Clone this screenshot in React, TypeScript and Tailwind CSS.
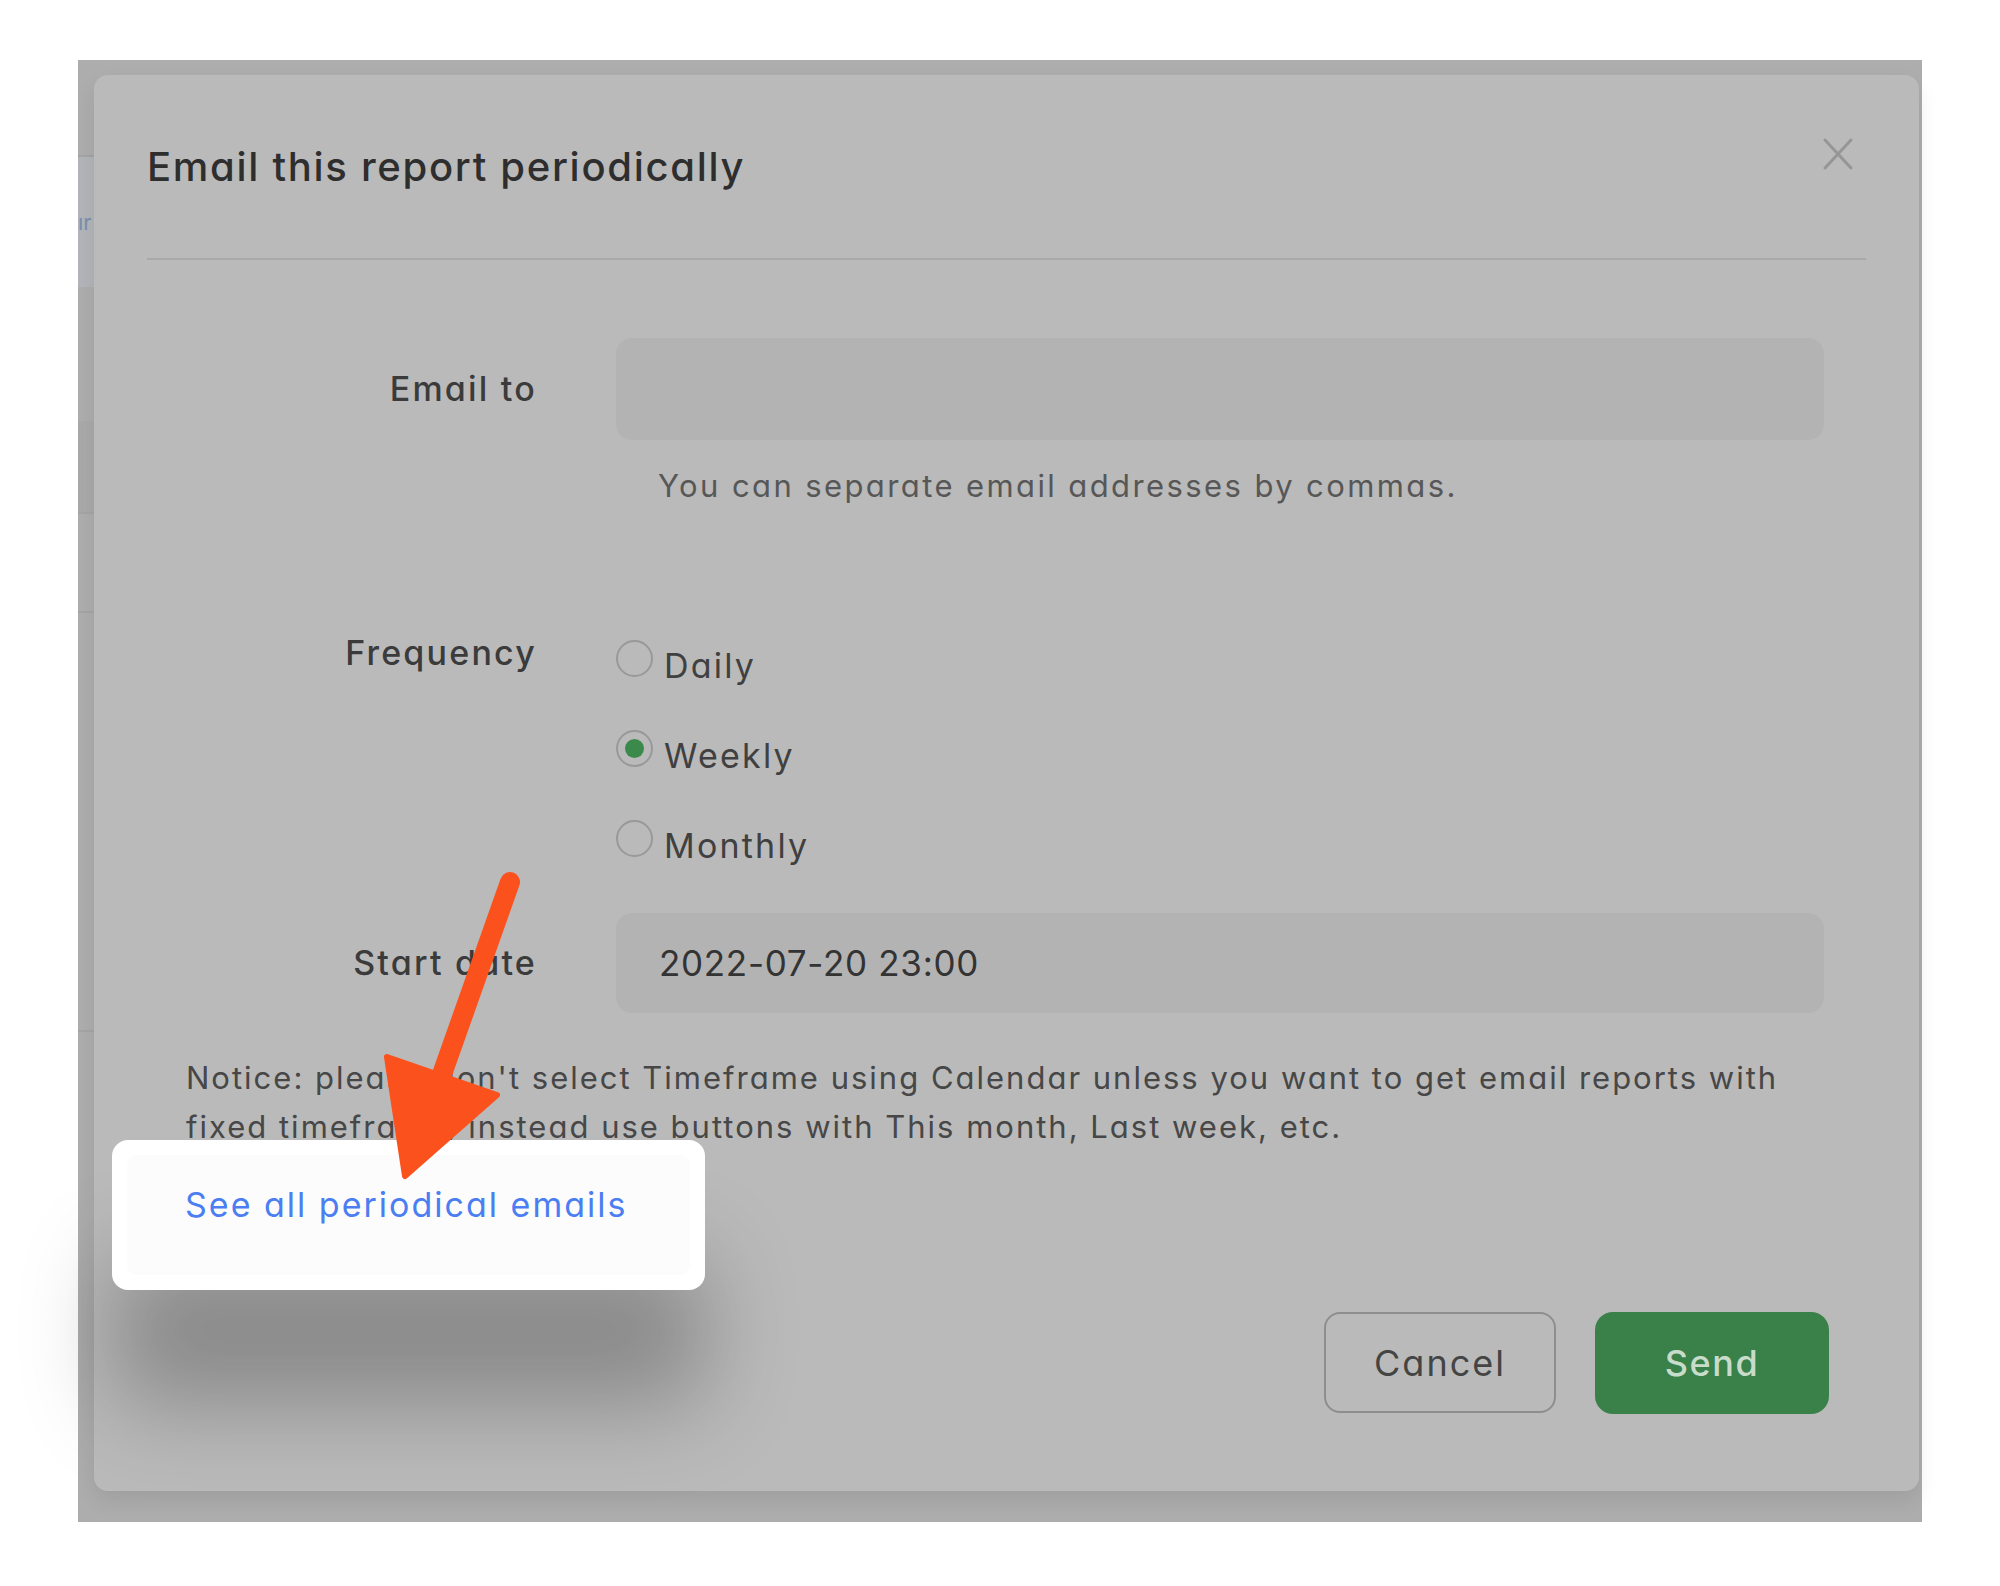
import React from "react";

const CloseIcon = () => (
  <svg width="36" height="36" viewBox="0 0 36 36" fill="none">
    <path d="M5 4 L31 32 M31 4 L5 32" stroke="#969696" strokeWidth="3" strokeLinecap="round" />
  </svg>
);

const Radio = ({ label, checked }: { label: string; checked?: boolean }) => (
  <div className="flex h-[56px] items-center">
    <span className="flex h-[37px] w-[37px] items-center justify-center rounded-full border-2 border-[#999999]">
      {checked && <span className="h-[19px] w-[19px] rounded-full bg-[#3b8a4b]" />}
    </span>
    <span className="ml-[11px] mt-[16px] text-[34px] leading-[40px] tracking-[2.2px] text-[#404040]">{label}</span>
  </div>
);

const PageEdge = () => (
  <div className="-mt-[15px] flex w-[16px] flex-col self-stretch">
    <div className="h-[97px] border-b-2 border-[#a4a4a4]" />
    <div className="flex h-[130px] items-center bg-[#b1b5b9] text-[22px] leading-[30px] text-[#7b8fa9]">ır</div>
    <div className="h-[134px]" />
    <div className="h-[93px] border-b-2 border-[#a4a4a4] bg-[#a9a9a9]" />
    <div className="h-[99px] border-b-2 border-[#a4a4a4]" />
    <div className="h-[419px] border-b-2 border-[#a4a4a4]" />
    <div className="flex-1" />
  </div>
);

const labelCls = "w-[390px] text-right text-[34px] font-medium leading-[40px] tracking-[2.2px] text-[#3b3b3b]";

export default function App() {
  return (
    <div className="relative h-[1586px] w-[2000px] overflow-hidden bg-white pl-[78px] pt-[60px] font-[family-name:Inter,'Liberation_Sans',sans-serif] [font-feature-settings:'cv11']">
      <div className="flex h-[1462px] w-[1844px] bg-[#adadad] pb-[31px] pr-[3px] pt-[15px]">
        <PageEdge />
        <div className="flex flex-1 flex-col rounded-[14px] bg-[#bababa] pl-[53px] pr-[53px] shadow-[0_10px_20px_rgba(0,0,0,0.08)]">
          {/* header */}
          <div className="flex items-start justify-between pt-[61px]">
            <h2 className="mt-[4px] text-[40px] font-medium leading-[54px] tracking-[1.7px] text-[#2e2e2e]">
              Email this report periodically
            </h2>
            <button className="mr-[10px]">
              <CloseIcon />
            </button>
          </div>
          <div className="mt-[64px] h-[2px] bg-[#a9a9a9]" />

          {/* email to */}
          <div className="mt-[78px] flex items-center">
            <label className={labelCls}>Email to</label>
            <div className="ml-[79px] h-[102px] w-[1208px] rounded-[16px] bg-[#b3b3b3]" />
          </div>
          <p className="mt-[26px] pl-[511px] text-[31px] leading-[40px] tracking-[2.4px] text-[#575757]">
            You can separate email addresses by commas.
          </p>

          {/* frequency */}
          <div className="mt-[124px] flex items-start">
            <label className={`mt-[3px] ${labelCls}`}>Frequency</label>
            <div className="ml-[79px] flex flex-col gap-[34px]">
              <Radio label="Daily" />
              <Radio label="Weekly" checked />
              <Radio label="Monthly" />
            </div>
          </div>

          {/* start date */}
          <div className="mt-[47px] flex items-center">
            <label className={labelCls}>Start date</label>
            <div className="ml-[79px] flex h-[100px] w-[1208px] items-center rounded-[16px] bg-[#b3b3b3] pl-[43px] text-[35px] tracking-[0.7px] text-[#333333]">
              2022-07-20 23:00
            </div>
          </div>

          <p className="mt-[40px] pl-[39px] text-[31px] leading-[49px] tracking-[2px] text-[#474747]">
            Notice: please don't select Timeframe using Calendar unless you want to get email reports with
            <br />
            fixed timeframe, instead use buttons with This month, Last week, etc.
          </p>

          {/* highlighted link */}
          <div className="relative z-10 -ml-[35px] -mt-[11px] h-[150px] w-[593px] rounded-[16px] bg-white p-[15px] shadow-[0_115px_90px_rgba(0,0,0,0.26)]">
            <div className="h-full rounded-[10px] bg-[#fcfcfc] pl-[58px] pt-[30px]">
              <a className="text-[34px] leading-[40px] tracking-[2px] text-[#4b7ef2]">See all periodical emails</a>
            </div>
          </div>

          {/* actions */}
          <div className="mt-[22px] flex justify-end gap-[39px] pr-[37px]">
            <button className="h-[101px] w-[232px] rounded-[16px] border-2 border-[#8e8e8e] text-[36px] tracking-[2px] text-[#444444]">
              Cancel
            </button>
            <button className="h-[102px] w-[234px] rounded-[18px] bg-[#3a8049] text-[36px] font-medium tracking-[1.5px] text-[#c7dccb]">
              Send
            </button>
          </div>
        </div>
      </div>

      {/* annotation arrow */}
      <svg className="pointer-events-none absolute left-0 top-0 z-20" width="2000" height="1586" viewBox="0 0 2000 1586">
        <path d="M510 882 L440 1080" stroke="#fb521d" strokeWidth="20" strokeLinecap="round" />
        <polygon points="387,1057 497,1095 405,1176" fill="#fb521d" stroke="#fb521d" strokeWidth="6" strokeLinejoin="round" />
      </svg>
    </div>
  );
}
